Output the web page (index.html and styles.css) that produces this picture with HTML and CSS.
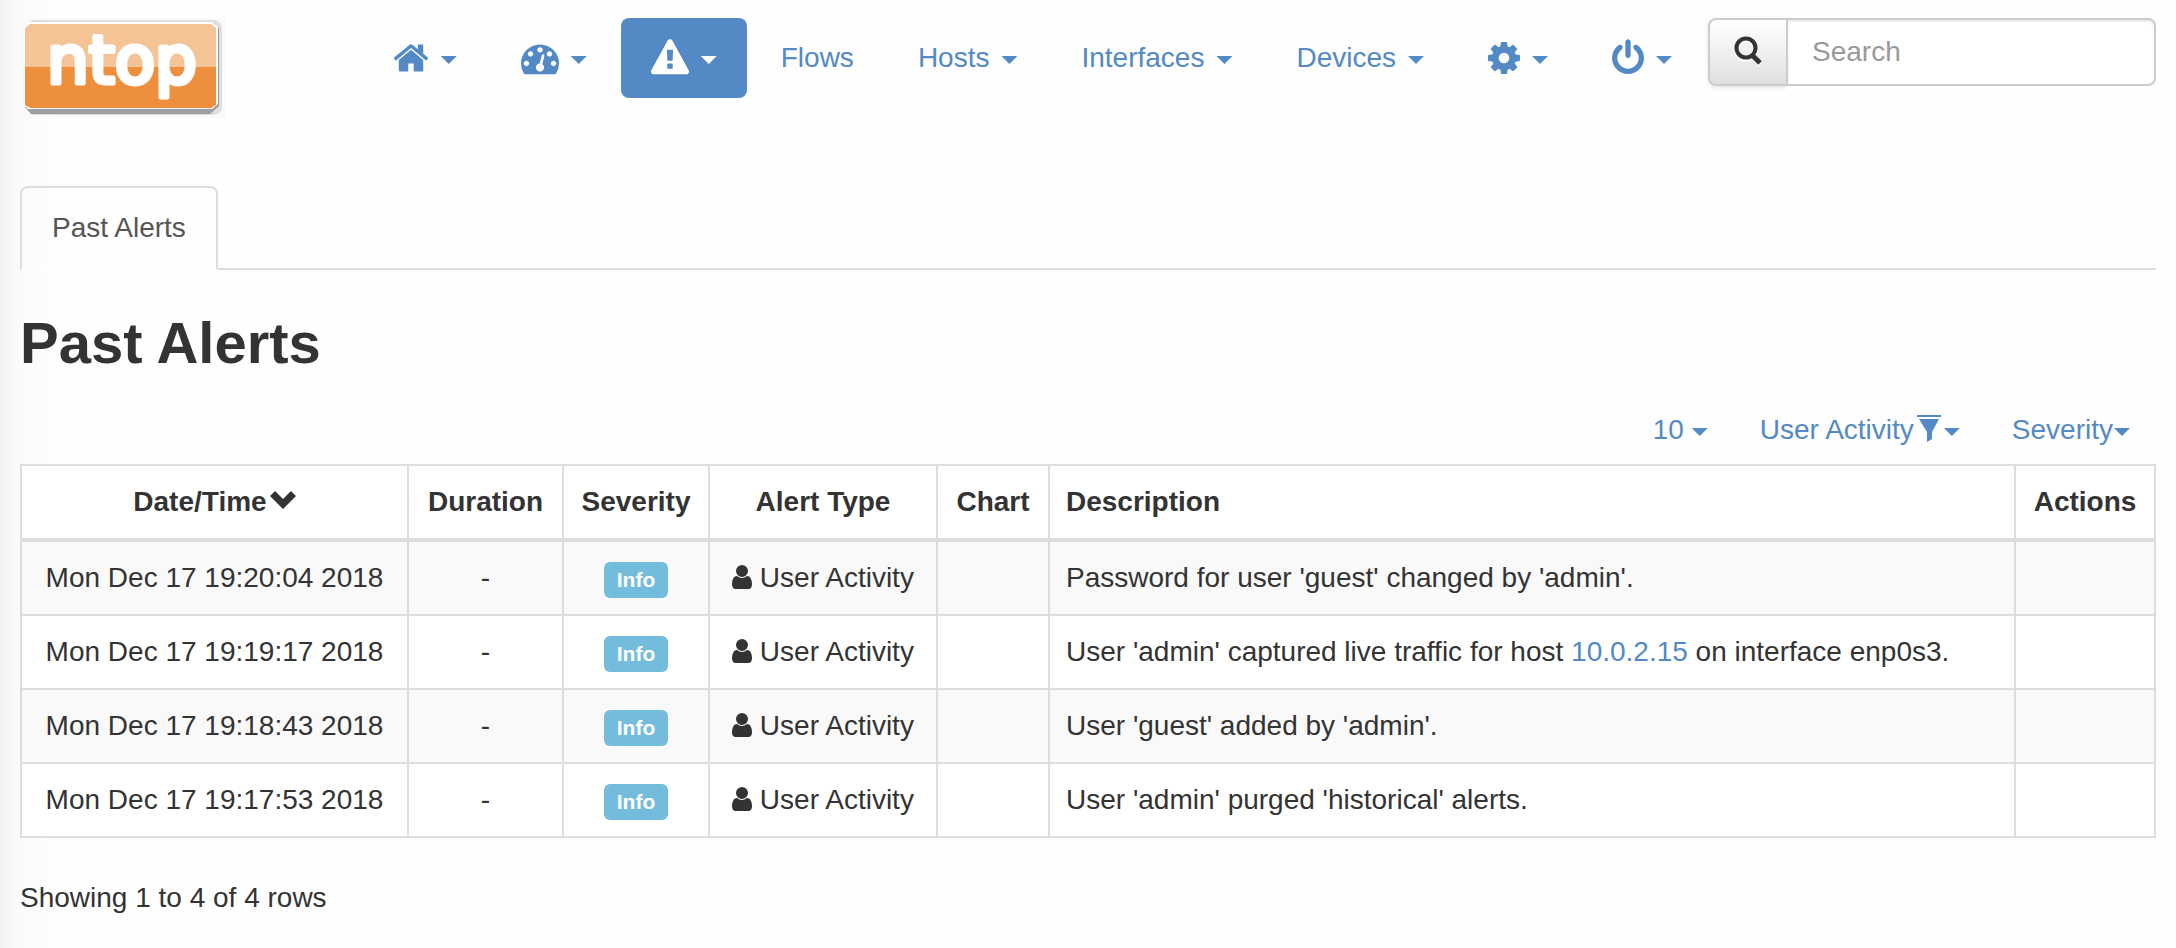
FILE: index.html
```html
<!DOCTYPE html>
<html lang="en">
<head>
<meta charset="utf-8">
<title>Past Alerts</title>
<link rel="stylesheet" href="styles.css">
</head>
<body>
<header class="masthead">
  <a class="logo" href="#" aria-label="ntop home">
    <svg width="206" height="100" viewBox="0 0 206 100">
      <rect width="206" height="100" fill="#fafafa"/>
      <path d="M12 2H194Q202 3 202 12V88Q202 96 194 97H12L5 89V8Z" fill="#dedede"/>
      <path d="M5 89L11 96H190L199 88V10L192 5V89Z" fill="#9f9f9f"/>
      <path d="M8 4H192L198 9V86L192 91H8L4 87V8Z" fill="#fff"/>
      <path d="M10 6H191L196 10V50H5V10Z" fill="#f4c496"/>
      <path d="M5 49H196V87L191 90H10L5 87Z" fill="#ed8f3c"/>
      <text class="logo-text" x="27" y="65">ntop</text>
    </svg>
  </a>
  <nav>
    <ul class="pills">
      <li><a href="#" aria-label="Home"><svg width="36" height="38" viewBox="48 0 1696 1792"><path d="M1472 992v480q0 26-19 45t-45 19h-384v-384h-256v384h-384q-26 0-45-19t-19-45v-480q0-1 .5-3t.5-3l575-474 575 474q1 2 1 6zm223-69l-62 74q-8 9-21 11h-3q-13 0-21-7l-692-577-692 577q-12 8-24 7-13-2-21-11l-62-74q-8-10-7-23.500t11-21.500l719-599q32-26 76-26t76 26l244 204v-195q0-14 9-23t23-9h192q14 0 23 9t9 23v408l219 182q10 8 11 21.500t-7 23.500z"/></svg><span class="caret"></span></a></li>
      <li><a href="#" aria-label="Dashboard"><svg width="38" height="38" viewBox="0 0 1792 1792"><path d="M384 1152q0-53-37.500-90.500t-90.500-37.500-90.500 37.500-37.500 90.500 37.500 90.500 90.500 37.500 90.500-37.500 37.500-90.500zm192-448q0-53-37.500-90.500t-90.500-37.500-90.500 37.500-37.500 90.500 37.500 90.500 90.500 37.500 90.500-37.500 37.500-90.500zm428 481l101-382q6-26-7.500-48.500t-38.500-29.500-48 6.500-30 39.500l-101 382q-60 5-107 43.500t-63 98.500q-20 77 20 146t117 89 146-20 89-117q16-60-6-117t-72-91zm660-33q0-53-37.500-90.500t-90.500-37.500-90.500 37.500-37.500 90.500 37.500 90.500 90.500 37.500 90.500-37.500 37.500-90.500zm-640-640q0-53-37.500-90.500t-90.500-37.500-90.500 37.500-37.500 90.500 37.500 90.500 90.500 37.500 90.500-37.500 37.500-90.500zm448 192q0-53-37.500-90.500t-90.500-37.500-90.500 37.500-37.500 90.500 37.500 90.500 90.500 37.500 90.500-37.500 37.500-90.500zm320 448q0 261-141 483-19 29-54 29h-1402q-35 0-54-29-141-221-141-483 0-182 71-348t191-286 286-191 348-71 348 71 286 191 191 286 71 348z"/></svg><span class="caret"></span></a></li>
      <li><a class="active" href="#" aria-label="Alerts"><svg width="38" height="38" viewBox="0 0 1792 1792"><path d="M1024 1375v-190q0-14-9.500-23.500t-22.500-9.500h-192q-13 0-22.500 9.500t-9.500 23.500v190q0 14 9.500 23.500t22.500 9.500h192q13 0 22.500-9.500t9.500-23.500zm-2-374l18-459q0-12-10-19-13-11-24-11h-220q-11 0-24 11-10 7-10 21l17 457q0 10 10 16.500t24 6.500h185q14 0 23.500-6.500t10.500-16.500zm-14-934l768 1408q35 63-2 126-17 29-46.500 46t-63.500 17h-1536q-34 0-63.500-17t-46.500-46q-37-63-2-126l768-1408q17-31 47-49t65-18 65 18 47 49z"/></svg><span class="caret"></span></a></li>
      <li><a href="#">Flows</a></li>
      <li><a href="#">Hosts<span class="caret"></span></a></li>
      <li><a href="#">Interfaces<span class="caret"></span></a></li>
      <li><a href="#">Devices<span class="caret"></span></a></li>
      <li><a href="#" aria-label="Settings"><svg width="32" height="38" viewBox="128 0 1536 1792"><path d="M1152 896q0-106-75-181t-181-75-181 75-75 181 75 181 181 75 181-75 75-181zm512-109v222q0 12-8 23t-20 13l-185 28q-19 54-39 91 35 50 107 138 10 12 10 25t-9 23q-27 37-99 108t-94 71q-12 0-26-9l-138-108q-44 23-91 38-16 136-29 186-7 28-36 28h-222q-14 0-24.500-8.500t-11.500-21.500l-28-184q-49-16-90-37l-141 107q-10 9-25 9-14 0-25-11-126-114-165-168-7-10-7-23 0-12 8-23 15-21 51-66.500t54-70.500q-27-50-41-99l-183-27q-13-2-21-12.500t-8-23.500v-222q0-12 8-23t19-13l186-28q14-46 39-92-40-57-107-138-10-12-10-24 0-10 9-23 26-36 98.500-107.500t94.500-71.500q13 0 26 10l138 107q44-23 91-38 16-136 29-186 7-28 36-28h222q14 0 24.500 8.500t11.500 21.500l28 184q49 16 90 37l142-107q9-9 24-9 13 0 25 10 129 119 165 170 7 8 7 22 0 12-8 23-15 21-51 66.500t-54 70.500q26 50 41 98l183 28q13 2 21 12.500t8 23.500z"/></svg><span class="caret"></span></a></li>
      <li><a href="#" aria-label="Log out"><svg width="32" height="38" viewBox="128 0 1536 1792"><path d="M1664 896q0 156-61 298t-164 245-245 164-298 61-298-61-245-164-164-245-61-298q0-182 80.500-343t226.500-270q43-32 95.500-25t83.500 50q32 42 24.500 94.500t-49.500 84.500q-98 74-151.500 181t-53.500 228q0 104 40.500 198.500t109.500 163.500 163.500 109.500 198.500 40.500 198.500-40.500 163.500-109.500 109.500-163.500 40.500-198.500q0-121-53.500-228t-151.500-181q-42-32-49.500-84.500t24.500-94.500q31-43 84-50t95 25q146 109 226.500 270t80.500 343zm-640-768v640q0 52-38 90t-90 38-90-38-38-90v-640q0-52 38-90t90-38 90 38 38 90z"/></svg><span class="caret"></span></a></li>
    </ul>
  </nav>
  <form class="search" role="search">
    <button class="search-button" type="button" aria-label="Search"><svg width="30" height="32" viewBox="0 0 30 32"><g fill="none" stroke="#fff"><circle cx="13" cy="14" r="9.500" stroke-width="4"/><path d="M19 21l8 8" stroke-width="5"/></g><g fill="none" stroke="#333"><circle cx="13" cy="12" r="9.500" stroke-width="4"/><path d="M19 19l8 8" stroke-width="5"/></g></svg></button>
    <input class="search-input" type="text" placeholder="Search" aria-label="Search">
  </form>
</header>

<main>
  <ul class="tabs">
    <li><a class="tab" href="#">Past Alerts</a></li>
  </ul>
  <h2 class="title">Past Alerts</h2>

  <div class="filters">
    <button class="filter" type="button">10<span class="caret"></span></button>
    <button class="filter tight" type="button">User Activity<svg class="funnel" width="24" height="27" viewBox="0 0 24 27"><path d="M0 0H24V2H0ZM2 4H22L15 17V24L10 27V17Z"/></svg><span class="caret"></span></button>
    <button class="filter tight" type="button">Severity<span class="caret"></span></button>
  </div>

  <table class="alerts">
    <colgroup><col class="col-date"><col class="col-duration"><col class="col-severity"><col class="col-type"><col class="col-chart"><col><col class="col-actions"></colgroup>
    <thead>
      <tr><th>Date/Time<svg class="sort" width="26" height="18" viewBox="0 0 26 18"><path d="M5 0L13 8L21 0L26 5L13 18L0 5Z"/></svg></th><th>Duration</th><th>Severity</th><th>Alert Type</th><th>Chart</th><th class="description">Description</th><th>Actions</th></tr>
    </thead>
    <tbody>
      <tr><td>Mon Dec 17 19:20:04 2018</td><td>-</td><td><span class="badge">Info</span></td><td><svg class="user" width="20" height="24" viewBox="256 128 1280 1536"><path d="M1536 1399q0 109-62.500 187t-150.500 78h-854q-88 0-150.500-78t-62.500-187q0-85 8.500-160.500t31.500-152 58.500-131 94-89 134.500-34.500q131 128 313 128t313-128q76 0 134.500 34.500t94 89 58.500 131 31.500 152 8.500 160.500zm-256-887q0 159-112.500 271.500t-271.500 112.500-271.500-112.500-112.500-271.500 112.500-271.500 271.500-112.500 271.500 112.500 112.500 271.500z"/></svg> User Activity</td><td></td><td class="description">Password for user 'guest' changed by 'admin'.</td><td></td></tr>
      <tr><td>Mon Dec 17 19:19:17 2018</td><td>-</td><td><span class="badge">Info</span></td><td><svg class="user" width="20" height="24" viewBox="256 128 1280 1536"><path d="M1536 1399q0 109-62.500 187t-150.500 78h-854q-88 0-150.500-78t-62.500-187q0-85 8.500-160.500t31.500-152 58.500-131 94-89 134.500-34.500q131 128 313 128t313-128q76 0 134.500 34.500t94 89 58.500 131 31.500 152 8.500 160.500zm-256-887q0 159-112.500 271.500t-271.500 112.500-271.500-112.500-112.500-271.500 112.500-271.500 271.500-112.500 271.500 112.500 112.500 271.500z"/></svg> User Activity</td><td></td><td class="description">User 'admin' captured live traffic for host <a class="host" href="#">10.0.2.15</a> on interface enp0s3.</td><td></td></tr>
      <tr><td>Mon Dec 17 19:18:43 2018</td><td>-</td><td><span class="badge">Info</span></td><td><svg class="user" width="20" height="24" viewBox="256 128 1280 1536"><path d="M1536 1399q0 109-62.500 187t-150.500 78h-854q-88 0-150.500-78t-62.500-187q0-85 8.500-160.500t31.500-152 58.500-131 94-89 134.500-34.500q131 128 313 128t313-128q76 0 134.500 34.500t94 89 58.500 131 31.500 152 8.500 160.500zm-256-887q0 159-112.500 271.500t-271.500 112.500-271.500-112.500-112.500-271.500 112.500-271.500 271.500-112.500 271.500 112.500 112.500 271.500z"/></svg> User Activity</td><td></td><td class="description">User 'guest' added by 'admin'.</td><td></td></tr>
      <tr><td>Mon Dec 17 19:17:53 2018</td><td>-</td><td><span class="badge">Info</span></td><td><svg class="user" width="20" height="24" viewBox="256 128 1280 1536"><path d="M1536 1399q0 109-62.500 187t-150.500 78h-854q-88 0-150.500-78t-62.500-187q0-85 8.500-160.500t31.500-152 58.500-131 94-89 134.500-34.500q131 128 313 128t313-128q76 0 134.500 34.500t94 89 58.500 131 31.500 152 8.500 160.500zm-256-887q0 159-112.500 271.500t-271.500 112.500-271.500-112.500-112.500-271.500 112.500-271.500 271.500-112.500 271.500 112.500 112.500 271.500z"/></svg> User Activity</td><td></td><td class="description">User 'admin' purged 'historical' alerts.</td><td></td></tr>
    </tbody>
  </table>
  <p class="summary">Showing 1 to 4 of 4 rows</p>
</main>
</body>
</html>
```
FILE: styles.css
```css
* {
  box-sizing: border-box;
}

body {
  margin: 0;
  padding: 18px 20px 20px;
  background: linear-gradient(to right, #f3f3f3, #fbfbfb 20px, #fefefe 60px);
  color: #333;
  font-family: "Liberation Sans", Arial, sans-serif;
  font-size: 28px;
  line-height: 40px;
}

svg {
  fill: currentColor;
}

a {
  color: #5389c5;
  text-decoration: none;
}

button,
input {
  font: inherit;
}

.caret {
  flex: none;
  width: 16px;
  height: 8px;
  margin-top: 4px;
  background: currentColor;
  clip-path: polygon(0 0, 100% 0, 50% 100%);
}

/* Header */
.masthead {
  display: flex;
  align-items: flex-start;
  gap: 6px;
}

.logo {
  display: flex;
  margin-right: auto;
}

.logo-text {
  fill: #fff;
  stroke: #fff;
  stroke-width: 5px;
  stroke-linejoin: round;
  font-family: "DejaVu Sans", sans-serif;
  font-size: 66px;
}

.pills {
  display: flex;
  gap: 4px;
  margin: 0;
  padding: 0;
  list-style: none;
}

.pills a {
  display: flex;
  align-items: center;
  gap: 12px;
  height: 80px;
  padding: 20px 30px;
  border-radius: 8px;
}

.pills .active {
  background: #5389c5;
  color: #fff;
}

.search {
  display: flex;
  width: 448px;
  height: 68px;
}

.search-button {
  display: flex;
  align-items: center;
  justify-content: center;
  width: 78px;
  padding: 0;
  border: 2px solid #ccc;
  border-right: 0;
  border-radius: 8px 0 0 8px;
  background: linear-gradient(#fff, #e0e0e0);
  box-shadow: 0 2px 4px rgba(0, 0, 0, 0.1);
}

.search-input {
  flex: 1;
  min-width: 0;
  padding: 0 24px;
  border: 2px solid #ccc;
  border-radius: 0 8px 8px 0;
  background: #fff;
  color: #555;
  box-shadow: inset 0 2px 2px rgba(0, 0, 0, 0.075);
}

.search-input::placeholder {
  color: #999;
}

/* Tabs and heading */
.tabs {
  display: flex;
  margin: 68px 0 0;
  padding: 0;
  border-bottom: 2px solid #ddd;
  list-style: none;
}

.tabs li {
  margin-bottom: -2px;
}

.tab {
  display: block;
  padding: 20px 30px;
  border: 2px solid #ddd;
  border-bottom-color: #fefefe;
  border-radius: 8px 8px 0 0;
  background: linear-gradient(to right, #fbfbfb, #fefefe 40px);
  color: #555;
}

.title {
  margin: 40px 0 20px;
  font-size: 58px;
  line-height: 66px;
}

/* Filters */
.filters {
  display: flex;
  justify-content: flex-end;
}

.filter {
  display: flex;
  align-items: center;
  gap: 8px;
  padding: 14px 26px;
  border: 0;
  background: none;
  color: #5389c5;
}

.filter.tight {
  gap: 1px;
}

.funnel {
  margin: 0 2px 4px;
}

/* Table */
.alerts {
  width: 100%;
  border-collapse: collapse;
  background: #fff;
}

.alerts th,
.alerts td {
  padding: 16px;
  border: 2px solid #ddd;
  text-align: center;
  white-space: nowrap;
}

.alerts th {
  padding: 16px 0;
}

.alerts thead th {
  border-bottom-width: 4px;
}

.alerts .description {
  padding-left: 16px;
  text-align: left;
}

.alerts tbody tr:nth-child(odd) {
  background: #f9f9f9;
}

.col-date {
  width: 387px;
}

.col-duration {
  width: 155px;
}

.col-severity {
  width: 146px;
}

.col-type {
  width: 228px;
}

.col-chart {
  width: 112px;
}

.col-actions {
  width: 140px;
}

.sort {
  margin: 0 0 2px 3px;
}

.user {
  margin-bottom: -2px;
}

.badge {
  display: inline-block;
  padding: 6px 13px;
  border-radius: 6px;
  background: #73bcdb;
  color: #fff;
  font-size: 21px;
  font-weight: bold;
  line-height: 24px;
}

.summary {
  margin: 40px 0 0;
}
```
